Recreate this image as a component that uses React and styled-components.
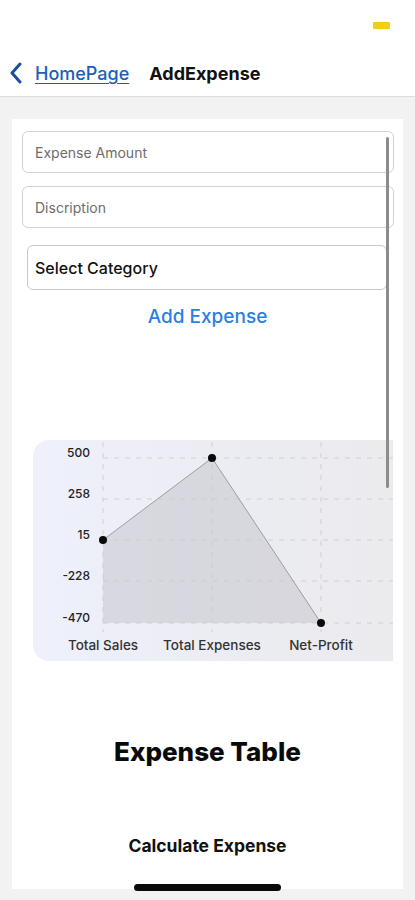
import React from "react";
import styled, { createGlobalStyle } from "styled-components";

const Global = createGlobalStyle`
  html, body { margin: 0; padding: 0; background: #f2f2f2; }
  body { font-family: Inter, "Noto Sans", "Liberation Sans", sans-serif; }
  * { box-sizing: border-box; }
`;

const Screen = styled.div`
  width: 415px;
  height: 900px;
  background: #f2f2f2;
  position: relative;
  overflow: hidden;
`;

const StatusBar = styled.div`
  height: 50px;
  background: #fff;
  display: flex;
  justify-content: flex-end;
  align-items: flex-start;
  padding: 22px 25px 0 0;
`;

const Battery = styled.div`
  width: 17px;
  height: 7px;
  background: #f3cc1c;
  border-radius: 1px;
`;

const NavBar = styled.div`
  height: 47px;
  background: #fff;
  border-bottom: 1px solid #dcdcdc;
  display: flex;
  align-items: flex-start;
  padding: 12px 0 0 9px;
`;

const BackLink = styled.a`
  display: flex;
  align-items: center;
  gap: 12px;
  color: #1c5fb8;
  font-size: 18px;
  font-weight: 500;
  text-decoration: underline;
  text-underline-offset: 3px;
  text-decoration-thickness: 1px;
`;

const Title = styled.div`
  margin-left: 20px;
  font-size: 18px;
  font-weight: 700;
  color: #111;
  line-height: 24px;
`;

const Card = styled.div`
  position: relative;
  margin: 22px 12px 0 12px;
  width: 391px;
  height: 770px;
  background: #fff;
  padding-top: 12px;
  display: flex;
  flex-direction: column;
`;

const Input = styled.div`
  margin: ${(p) => p.$mt || 0}px 9px 0 10px;
  height: 42px;
  border: 1px solid #d2d2d2;
  border-radius: 6px;
  display: flex;
  align-items: center;
  padding-left: 12px;
  color: #6d6d6d;
  font-size: 14px;
`;

const Select = styled.div`
  margin: 17px 16px 0 15px;
  height: 45px;
  border: 1px solid #c8c8c8;
  border-radius: 6px;
  display: flex;
  align-items: center;
  padding-left: 7px;
  color: #111;
  font-size: 16px;
  font-weight: 500;
`;

const AddButton = styled.div`
  margin-top: 15px;
  text-align: center;
  color: #2a7fe0;
  font-size: 19px;
  font-weight: 500;
  line-height: 24px;
`;

const ScrollBar = styled.div`
  position: absolute;
  left: 374px;
  top: 18px;
  width: 3px;
  height: 351px;
  border-radius: 2px;
  background: #8c8c8c;
`;

const ChartClip = styled.div`
  margin: 111px 10px 0 10px;
  overflow: hidden;
`;

const ChartBox = styled.div`
  margin-left: 11px;
  width: 400px;
  height: 221px;
  border-radius: 16px;
  background: linear-gradient(90deg, #eef0fb 0%, #ebecf1 60%, #ebebed 100%);
`;

const SectionTitle = styled.div`
  margin-top: 75px;
  text-align: center;
  font-size: 26px;
  font-weight: 800;
  color: #0a0a0a;
`;

const CalcButton = styled.div`
  margin-top: 68px;
  text-align: center;
  font-size: 17.5px;
  font-weight: 700;
  color: #111;
`;

const HomeIndicator = styled.div`
  position: absolute;
  left: 134px;
  top: 884px;
  width: 147px;
  height: 7px;
  border-radius: 4px;
  background: #0a0a0a;
`;

const yLines = [18, 59, 100, 141, 183];
const yLabels = ["500", "258", "15", "-228", "-470"];
const xs = [70, 179, 288];
const xLabels = ["Total Sales", "Total Expenses", "Net-Profit"];
const pts = [
  [70, 100],
  [179, 18],
  [288, 183],
];

function Chart() {
  return (
    <ChartBox>
      <svg width="400" height="221" viewBox="0 0 400 221">
        {xs.map((x) => (
          <line key={x} x1={x} y1="2" x2={x} y2="192" stroke="#cfd0d4" strokeWidth="1" strokeDasharray="5 6" />
        ))}
        {yLines.map((y) => (
          <line key={y} x1="70" y1={y} x2="400" y2={y} stroke="#cfd0d4" strokeWidth="1" strokeDasharray="5 6" />
        ))}
        <polygon points="70,100 179,18 288,183 70,183" fill="#c9cad0" fillOpacity="0.6" stroke="none" />
        <polyline points="70,100 179,18 288,183" fill="none" stroke="#9c9da2" strokeWidth="1" />
        {pts.map(([x, y]) => (
          <circle key={x} cx={x} cy={y} r="4" fill="#0a0a0a" />
        ))}
        {yLabels.map((t, i) => (
          <text key={t} x="57" y={yLines[i] - 1} textAnchor="end" fontSize="12" fontWeight="500" fill="#222" fontFamily="Inter, sans-serif">
            {t}
          </text>
        ))}
        {xLabels.map((t, i) => (
          <text key={t} x={xs[i]} y="210" textAnchor="middle" fontSize="13.5" fontWeight="500" fill="#333" fontFamily="Inter, sans-serif">
            {t}
          </text>
        ))}
      </svg>
    </ChartBox>
  );
}

export default function App() {
  return (
    <Screen>
      <Global />
      <StatusBar>
        <Battery />
      </StatusBar>
      <NavBar>
        <BackLink>
          <svg width="14" height="22" viewBox="0 0 14 22">
            <path d="M11 2 L3 11 L11 20" fill="none" stroke="#1a4f9c" strokeWidth="3" strokeLinecap="round" strokeLinejoin="round" />
          </svg>
          HomePage
        </BackLink>
        <Title>AddExpense</Title>
      </NavBar>
      <Card>
        <Input>Expense Amount</Input>
        <Input $mt={13}>Discription</Input>
        <Select>Select Category</Select>
        <AddButton>Add Expense</AddButton>
        <ChartClip>
          <Chart />
        </ChartClip>
        <SectionTitle>Expense Table</SectionTitle>
        <CalcButton>Calculate Expense</CalcButton>
        <ScrollBar />
      </Card>
      <HomeIndicator />
    </Screen>
  );
}
